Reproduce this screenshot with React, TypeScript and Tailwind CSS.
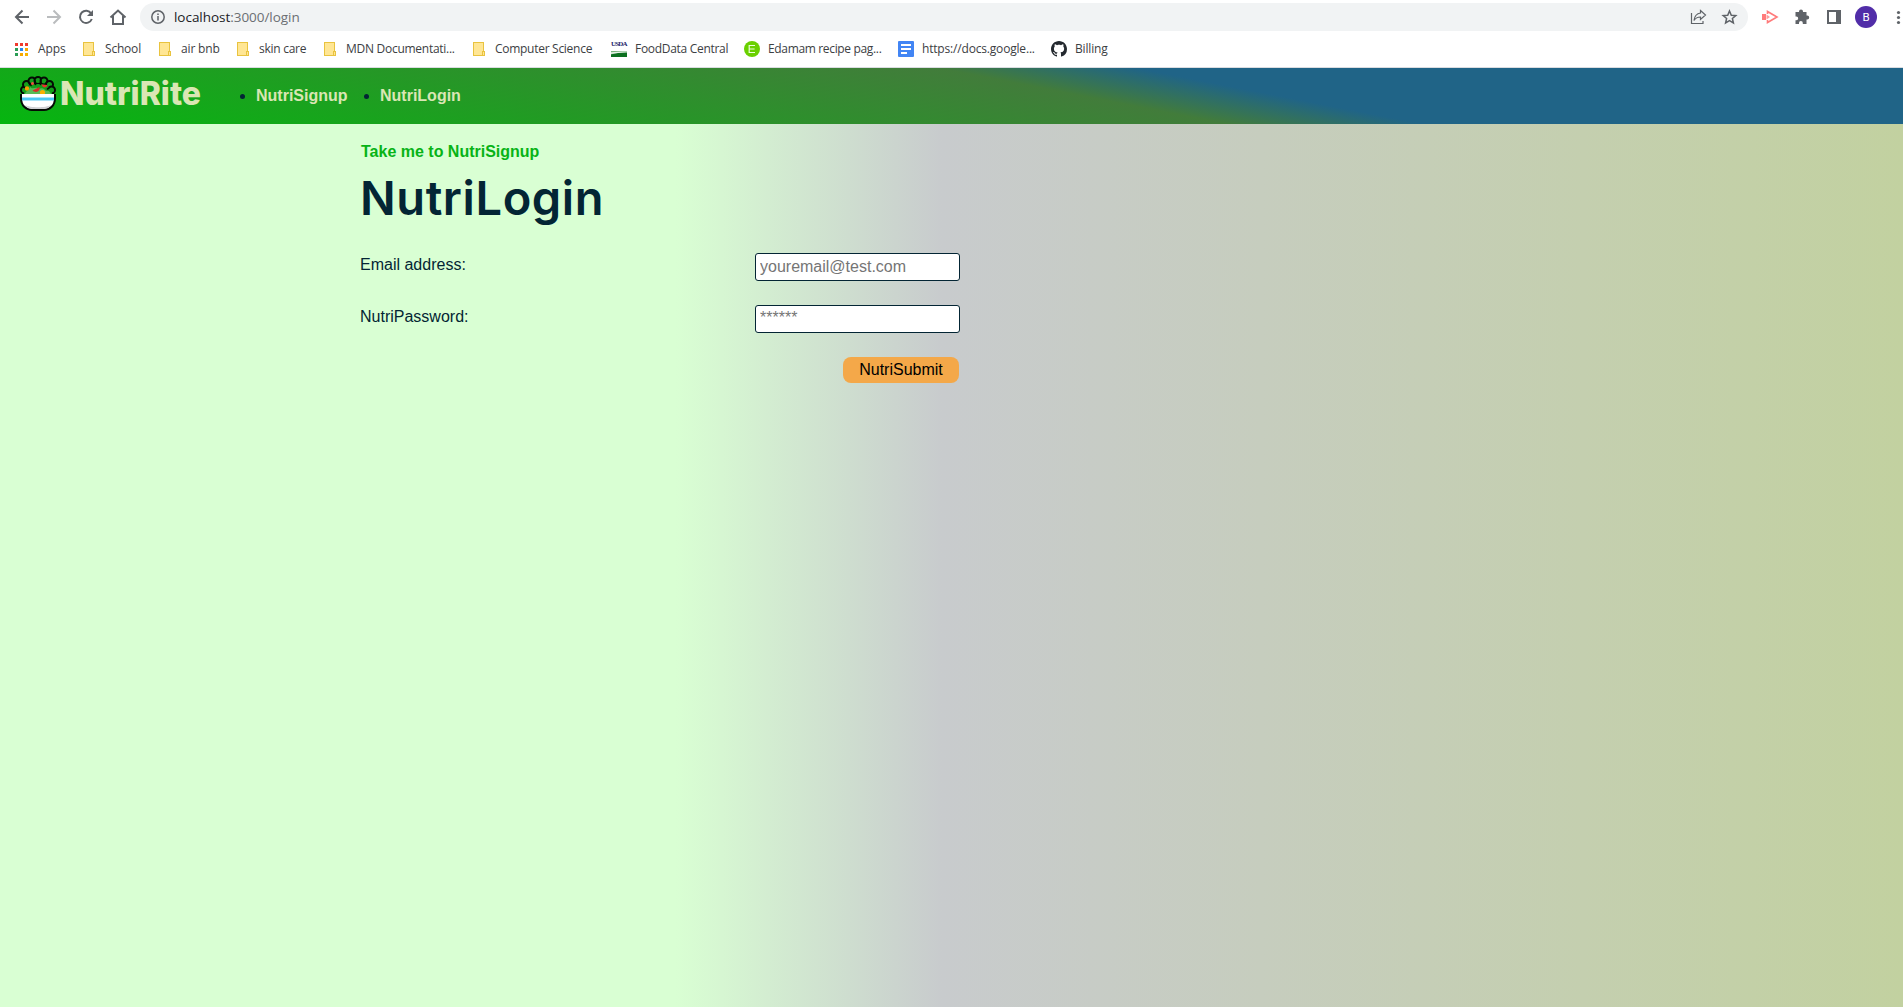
import React from "react";

const Folder = () => (
  <svg width="12" height="14" viewBox="0 0 12 14" className="block">
    <rect x="0.5" y="0.5" width="10" height="13" fill="#ffe694" stroke="#e9c33f" />
    <rect x="9.5" y="9.5" width="2" height="4" fill="#ffe694" stroke="#e9c33f" />
  </svg>
);

const AppsIcon = () => (
  <svg width="13" height="13" viewBox="0 0 13 13" className="block">
    {["#f03a2e", "#f03a2e", "#f03a2e", "#2a9d55", "#2787f0", "#f8a800", "#2a9d55", "#f8a800", "#f8b400"].map((c, i) => (
      <rect key={i} x={(i % 3) * 5} y={Math.floor(i / 3) * 5} width="3" height="3" fill={c} />
    ))}
  </svg>
);

const Usda = () => (
  <div className="flex h-4 w-4 flex-col justify-between">
    <span className="block h-[7px] whitespace-nowrap font-['Liberation_Serif',serif] text-[7px] leading-[7px] font-bold tracking-[-0.8px] text-[#1d2468]">USDA</span>
    <svg width="16" height="6" viewBox="0 0 16 6" className="block">
      <rect width="16" height="6" fill="#0c7020" />
      <path d="M0 0H16V1C10 1 5 2 0 3.5Z" fill="#79b27e" />
      <path d="M0 1.2C5 1 10 .6 16 .5V1.5C10 1.4 5 2.2 0 3Z" fill="#e6f2e6" />
    </svg>
  </div>
);

const Edamam = () => (
  <svg width="16" height="16" viewBox="0 0 16 16" className="block">
    <circle cx="8" cy="8" r="8" fill="#6ad000" />
    <path d="M11 4.5H5.2V11.5H11M5.2 8H10.6" fill="none" stroke="#eaffd9" strokeWidth="1.2" />
  </svg>
);

const Docs = () => (
  <svg width="16" height="16" viewBox="0 0 16 16" className="block">
    <rect width="16" height="16" rx="1" fill="#4285f4" />
    <path d="M3 4H13M3 8H13M3 12H9" stroke="#fff" strokeWidth="2" />
  </svg>
);

const Github = () => (
  <svg width="16" height="16" viewBox="0 0 16 16" className="block">
    <path fill="#24292f" fillRule="evenodd" d="M8 0C3.58 0 0 3.58 0 8c0 3.54 2.29 6.53 5.47 7.59.4.07.55-.17.55-.38 0-.19-.01-.82-.01-1.49-2.01.37-2.53-.49-2.69-.94-.09-.23-.48-.94-.82-1.13-.28-.15-.68-.52-.01-.53.63-.01 1.08.58 1.23.82.72 1.21 1.87.87 2.33.66.07-.52.28-.87.51-1.07-1.78-.2-3.64-.89-3.64-3.95 0-.87.31-1.59.82-2.15-.08-.2-.36-1.02.08-2.12 0 0 .67-.21 2.2.82.64-.18 1.32-.27 2-.27s1.36.09 2 .27c1.53-1.04 2.2-.82 2.2-.82.44 1.1.16 1.92.08 2.12.51.56.82 1.27.82 2.15 0 3.07-1.87 3.75-3.65 3.95.29.25.54.73.54 1.48 0 1.07-.01 1.93-.01 2.2 0 .21.15.46.55.38A8.01 8.01 0 0 0 16 8c0-4.42-3.58-8-8-8Z" />
  </svg>
);

const bookmarks = [
  { label: "Apps", icon: <AppsIcon />, box: "w-[68px]", slot: "w-[23px]", track: "tracking-[-0.1px]" },
  { label: "School", icon: <Folder />, box: "w-[76px]", slot: "w-[22px]", track: "tracking-[-0.2px]" },
  { label: "air bnb", icon: <Folder />, box: "w-[78px]", slot: "w-[22px]", track: "tracking-[-0.15px]" },
  { label: "skin care", icon: <Folder />, box: "w-[87px]", slot: "w-[22px]", track: "tracking-[-0.27px]" },
  { label: "MDN Documentati...", icon: <Folder />, box: "w-[149px]", slot: "w-[22px]", track: "tracking-[-0.27px]" },
  { label: "Computer Science", icon: <Folder />, box: "w-[138px]", slot: "w-[22px]", track: "tracking-[-0.28px]" },
  { label: "FoodData Central", icon: <Usda />, box: "w-[133px]", slot: "w-[24px]", track: "tracking-[-0.3px]" },
  { label: "Edamam recipe pag...", icon: <Edamam />, box: "w-[154px]", slot: "w-[24px]", track: "tracking-[-0.34px]" },
  { label: "https://docs.google...", icon: <Docs />, box: "w-[153px]", slot: "w-[24px]", track: "tracking-[-0.18px]" },
  { label: "Billing", icon: <Github />, box: "w-[70px]", slot: "w-[24px]", track: "tracking-[-0.15px]" },
];

function BrowserBar() {
  return (
    <div className="h-[68px] border-b border-[#dadce0] bg-white font-['Open_Sans','Noto_Sans',sans-serif]">
      <div className="flex h-[34px] items-center">
        <svg width="140" height="34" viewBox="0 0 140 34" fill="none" strokeWidth="2" className="shrink-0">
          <path d="M29 17H16.5M22.5 10.5L16 17L22.5 23.5" stroke="#5f6368" />
          <path d="M47 17H59.5M53.5 10.5L60 17L53.5 23.5" stroke="#babcbe" />
          <path d="M91.2 13.5A6.1 6.1 0 1 0 91.8 19" stroke="#5f6368" />
          <path d="M93 10V16H87Z" fill="#5f6368" />
          <path d="M110.5 17.5L118 10.5L125.500 17.5M113 16V24H123V16" stroke="#5f6368" />
        </svg>
        <div className="flex h-7 w-[1608px] shrink-0 items-center rounded-full bg-[#f1f3f4] pl-[11px]">
          <svg width="14" height="14" viewBox="0 0 14 14" fill="none" stroke="#5f6368" strokeWidth="1.5">
            <circle cx="7" cy="7" r="6.200" />
            <path d="M7 6V10.5M7 3.500V5" />
          </svg>
          <span className="ml-[9px] text-[13.5px] leading-[20px] tracking-[-0.04px] text-[#6b6f73]"><span className="text-[#202124]">localhost</span>:3000/login</span>
          <svg width="50" height="20" viewBox="0 0 50 20" fill="none" stroke="#5f6368" className="mr-[9px] ml-auto">
            <path d="M2.500 6V16.500H14V14" strokeWidth="1.200" />
            <path d="M11.500 3.500L16.500 8L11.500 12.500V10C8.500 10 6.500 11 5 13.500C5.500 9.500 7.500 6.500 11.500 6Z" strokeWidth="1.200" />
            <path d="M40.500 4L42.300 8.200L46.800 8.600L43.400 11.500L44.400 16L40.500 13.600L36.600 16L37.600 11.500L34.200 8.600L38.700 8.200Z" strokeWidth="1.500" />
          </svg>
        </div>
        <svg width="155" height="34" viewBox="1748 0 155 34" className="shrink-0">
          <path d="M1762 14H1766V20H1762Z" fill="#ff7b7b" />
          <path d="M1767.500 14V11.500L1777 17L1767.500 22.500V20" fill="none" stroke="#ff7b7b" strokeWidth="1.600" />
          <path d="M1766.500 14.500V19.500L1770 17Z" fill="#ff9b9b" />
          <path d="M1795.500 12H1799V11.500A2 2 0 0 1 1803 11.500V12H1806.500V15.500H1807.200A2 2 0 0 1 1807.200 19.500H1806.500V24H1802.800V23A1.900 1.900 0 0 0 1799 23V24H1795.500V20.200H1796.300A1.900 1.900 0 0 0 1796.300 16.400H1795.500Z" fill="#5f6368" />
          <path d="M1827 10H1841V24H1827ZM1829 12V22H1836V12Z" fill="#5f6368" fillRule="evenodd" />
          <circle cx="1866" cy="17" r="11" fill="#512da8" />
          <text x="1866" y="21.200" textAnchor="middle" fontSize="11.500" fill="#fff" fontFamily="Roboto">B</text>
          <circle cx="1898.500" cy="12.500" r="1.600" fill="#5f6368" />
          <circle cx="1898.500" cy="17.500" r="1.600" fill="#5f6368" />
          <circle cx="1898.500" cy="22.500" r="1.600" fill="#5f6368" />
        </svg>
      </div>
      <div className="flex h-[30px] items-center pl-[15px]">
        {bookmarks.map((b) => (
          <div key={b.label} className={`flex shrink-0 items-center ${b.box}`}>
            <div className={`shrink-0 ${b.slot}`}>{b.icon}</div>
            <span className={`whitespace-nowrap text-[12px] leading-4 text-[#3c4043] ${b.track}`}>{b.label}</span>
          </div>
        ))}
      </div>
    </div>
  );
}

const leaves = [
  [4.5, 14],
  [6.5, 8.500],
  [12, 5],
  [18, 4.500],
  [24, 5],
  [29.500, 8.500],
  [31.500, 14],
];

const SaladBowl = () => (
  <svg width="36" height="35" viewBox="0 0 36 35" className="block shrink-0">
    {leaves.map(([x, y]) => (
      <circle key={x} cx={x} cy={y} r="3.500" fill="#14a01b" stroke="#050b05" strokeWidth="2" />
    ))}
    <path d="M4 18C4 12 8 8 18 8C28 8 32 12 32 18Z" fill="#14a01b" />
    <path d="M9.500 6.500L11 9.500M15 4.500L15.500 8.500M21 4.500L20.500 8.500M26.500 6.500L25 10M29.500 11.500L27.500 13" stroke="#050b05" strokeWidth="1.600" strokeLinecap="round" />
    <path d="M5 18C6 14 9 16 10 11C13 14 16 10 19 13C22 11 25 13 26 15C29 14 30 16 31 18Z" fill="#58ba55" />
    <circle cx="7" cy="12.500" r="2.200" fill="#f6a000" />
    <circle cx="12.500" cy="7.500" r="1.500" fill="#f0563d" />
    <path d="M12.500 14.500L19.500 11C20.500 14.500 16.500 18 12.500 14.500Z" fill="#d82a2a" />
    <path d="M21.500 8.500L27.500 9C26.500 12.500 22.500 12 21.500 8.500Z" fill="#e92f2f" />
    <circle cx="22.500" cy="16.500" r="2.600" fill="#f9b000" />
    <path d="M1 18V22C1 29.500 6 34 12 34H24C30 34 35 29.500 35 22V18" fill="#fff" stroke="#050b05" strokeWidth="2" />
    <path d="M2 21.500H34V24.500H2Z" fill="#4cc8f5" />
    <path d="M5 29C10 32 26 32 31 29C29 32 26 33 23 33H13C10 33 7 32 5 29Z" fill="#d0d0d4" />
  </svg>
);

export default function App() {
  return (
    <div className="flex h-[1007px] w-[1903px] flex-col overflow-hidden font-['Liberation_Sans',Arial,sans-serif] text-base text-[#032534]">
      <BrowserBar />
      <header className="flex h-14 shrink-0 bg-[linear-gradient(11deg,#05b60f_0%,#427c3b_56%,#206487_65%)]">
        <div className="flex w-[240px] shrink-0 pt-2 pl-[20px]">
          <SaladBowl />
          <span className="ml-[4px] font-['Inter',sans-serif] text-[32px] leading-[36px] font-extrabold text-[#dae6b4]">NutriRite</span>
        </div>
        <nav className="flex items-center font-bold text-[#dae6b4]">
          <span className="mr-[11px] h-[5px] w-[5px] rounded-full bg-[#032534]" />
          <a className="w-[108px]">NutriSignup</a>
          <span className="mr-[11px] h-[5px] w-[5px] rounded-full bg-[#032534]" />
          <a>NutriLogin</a>
        </nav>
      </header>
      <main className="grow bg-[linear-gradient(90deg,#d9ffd3_35.500%,#c8cbcd_49.500%,#c2d1a0_100%)] pl-[360px]">
        <a className="mt-[19px] ml-px block leading-[18px] font-bold text-[#07b316]">Take me to NutriSignup</a>
        <h1 className="mt-[8px] font-['Inter',sans-serif] text-[47px] leading-[58px] font-semibold tracking-[0.6px]">NutriLogin</h1>
        <form className="mt-[26px] flex w-[600px] flex-col gap-6">
          <label className="flex h-7 justify-between">
            <span className="pt-[3px] leading-[18px]">Email address:</span>
            <input placeholder="youremail@test.com" className="w-[205px] rounded-[3px] border border-[#032534] bg-white px-1 placeholder:text-[#757575]" />
          </label>
          <label className="flex h-7 justify-between">
            <span className="pt-[3px] leading-[18px]">NutriPassword:</span>
            <input placeholder="******" className="w-[205px] rounded-[3px] border border-[#032534] bg-white px-1 pb-0.5 placeholder:text-[#757575]" />
          </label>
          <button type="button" className="mr-px h-[26px] w-[116px] self-end rounded-lg bg-[#f4a849] text-black">NutriSubmit</button>
        </form>
      </main>
    </div>
  );
}
